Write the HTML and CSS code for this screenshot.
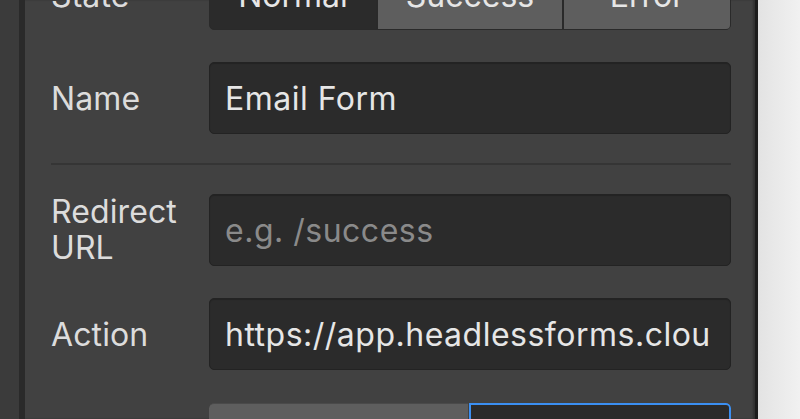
FILE: index.html
```html
<!DOCTYPE html>
<html>
<head>
<meta charset="utf-8">
<link rel="stylesheet" href="styles.css">
</head>
<body>
<div class="app">
  <div class="gutter"></div>
  <div class="panel">
    <div class="content">
      <div class="row seg-row">
        <div class="label">State</div>
        <div class="seg">
          <div class="seg-item active">Normal</div>
          <div class="seg-item mid">Success</div>
          <div class="seg-item">Error</div>
        </div>
      </div>
      <div class="row">
        <div class="label">Name</div>
        <div class="input"><span class="val">Email Form</span></div>
      </div>
      <div class="divider"></div>
      <div class="row">
        <div class="label">Redirect<br>URL</div>
        <div class="input placeholder"><span class="val">e.g. /success</span></div>
      </div>
      <div class="row">
        <div class="label">Action</div>
        <div class="input"><span class="val">https://app.headlessforms.cloud/api/v1/form</span></div>
      </div>
      <div class="row">
        <div class="label">Method</div>
        <div class="seg seg2">
          <div class="seg-item">GET</div>
          <div class="seg-item selected">POST</div>
        </div>
      </div>
    </div>
  </div>
  <div class="canvas"></div>
</div>
</body>
</html>
```
FILE: styles.css
```css
html, body {
  margin: 0;
  padding: 0;
  height: 100%;
  overflow: hidden;
}
body {
  background: #3c3c3c;
  font-family: Inter, "Noto Sans", sans-serif;
  font-size: 32px;
  color: #e2e2e2;
}
.app {
  display: flex;
  height: 419px;
}
.gutter {
  width: 19px;
  background: #3b3b3b;
  border-right: 6px solid #2a2a2a;
  flex: none;
}
.panel {
  flex: none;
  width: 730px;
  background: #414141;
  border-right: 3px solid #1c1c1c;
  box-shadow: inset -2px 0 2px rgba(0,0,0,0.25);
  overflow: hidden;
}
.content {
  padding: 0 24px 0 26px;
  margin-top: -40px;
  display: flex;
  flex-direction: column;
}
.row {
  display: grid;
  grid-template-columns: 158px minmax(0, 1fr);
  align-items: center;
  margin-bottom: 32px;
}
.label {
  line-height: 36px;
  color: #dcdcdc;
  letter-spacing: 0.1px;
  padding-top: 1px;
}
.input {
  box-sizing: border-box;
  height: 72px;
  line-height: 36px;
  padding: 18px 21px 16px 15px;
  background: #2b2b2b;
  border: 1px solid #232323;
  border-radius: 5px;
  color: #e6e6e6;
  box-shadow: inset 0 1px 1px rgba(0,0,0,0.2);
  min-width: 0;
}
.val {
  display: block;
  white-space: nowrap;
  overflow: hidden;
  letter-spacing: 0.5px;
}
.placeholder {
  color: #8a8a8a;
}
.divider {
  height: 2px;
  background: #353535;
  margin: -3px 0 28px 0;
}
.seg {
  display: flex;
  height: 68px;
  border-radius: 5px;
  overflow: hidden;
  border: 1px solid #2a2a2a;
  background: #2a2a2a;
  gap: 2px;
}
.seg-item {
  flex: 1;
  display: flex;
  align-items: center;
  justify-content: center;
  background: #5e5e5e;
  color: #e6e6e6;
}
.seg-item.active {
  background: #2b2b2b;
  flex: 0 0 166px;
}
.seg-item.mid {
  flex: 0 0 184px;
}
.seg2 {
  height: 72px;
  border: none;
  background: none;
  gap: 1px;
  margin-top: 1px;
}
.seg2 .seg-item:first-child {
  flex: 0 0 259px;
  border-radius: 5px 0 0 5px;
  border-top: 1px solid #4a4a4a;
}
.seg-item.selected {
  background: #2b2b2b;
  border: 2px solid #3b8ff2;
  border-radius: 0 5px 5px 0;
}
.canvas {
  flex: 1;
  background: linear-gradient(90deg, #e3e3e3, #f1f1f1);
}
```
